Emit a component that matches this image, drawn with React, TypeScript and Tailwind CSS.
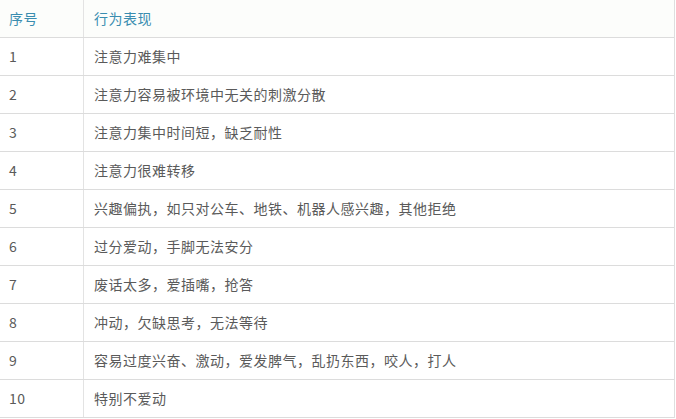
const rows: [string, string][] = [
  ['1', '注意力难集中'],
  ['2', '注意力容易被环境中无关的刺激分散'],
  ['3', '注意力集中时间短，缺乏耐性'],
  ['4', '注意力很难转移'],
  ['5', '兴趣偏执，如只对公车、地铁、机器人感兴趣，其他拒绝'],
  ['6', '过分爱动，手脚无法安分'],
  ['7', '废话太多，爱插嘴，抢答'],
  ['8', '冲动，欠缺思考，无法等待'],
  ['9', '容易过度兴奋、激动，爱发脾气，乱扔东西，咬人，打人'],
  ['10', '特别不爱动'],
];

export default function App() {
  return (
    <div
      className="w-[676px] h-[419px] bg-white overflow-hidden text-[14px] tracking-[0.5px]"
      style={{ fontFamily: '"Noto Sans CJK SC", "Liberation Sans", sans-serif' }}
    >
      <div className="w-[675px] border-r border-[#dedede]">
        <div className="flex h-[38px] border-b border-[#dcdcdc] bg-[#fcfdfb] text-[#3a8db0]">
          <div className="w-[84px] shrink-0 border-r border-[#e3e3e3] pl-[9px] flex items-center">序号</div>
          <div className="flex-1 pl-[10px] flex items-center">行为表现</div>
        </div>
        {rows.map(([n, t]) => (
          <div key={n} className="flex h-[38px] border-b border-[#dcdcdc] text-[#5a5a5a]">
            <div className="w-[84px] shrink-0 border-r border-[#e3e3e3] pl-[9px] flex items-center">{n}</div>
            <div className="flex-1 pl-[10px] flex items-center">{t}</div>
          </div>
        ))}
      </div>
    </div>
  );
}
